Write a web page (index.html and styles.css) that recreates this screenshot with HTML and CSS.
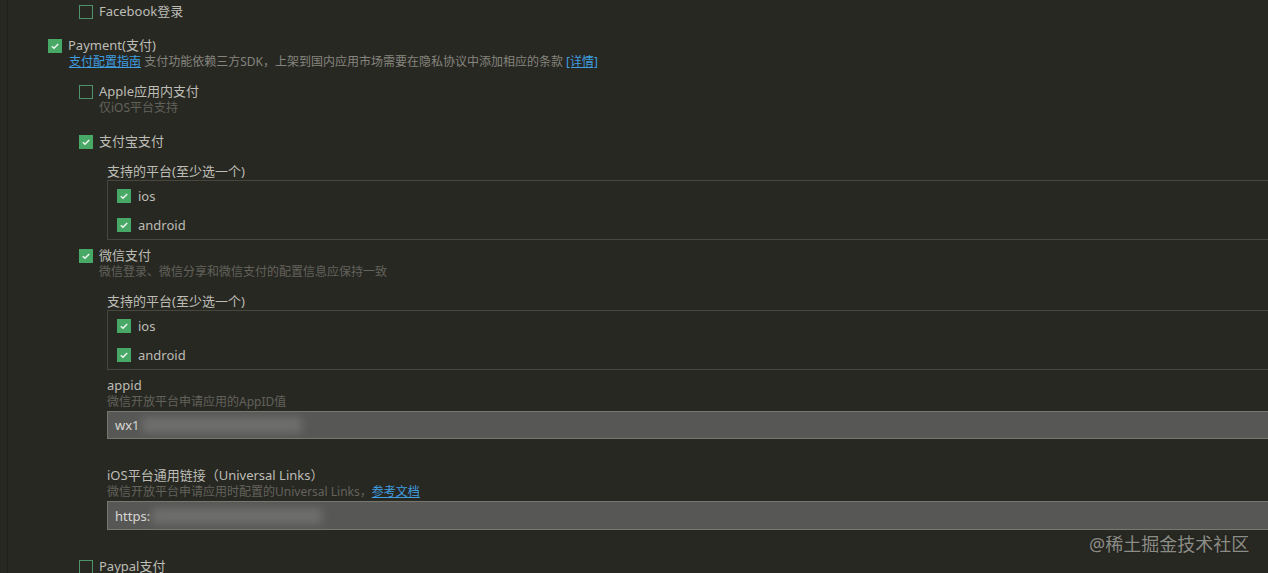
FILE: index.html
```html
<!DOCTYPE html>
<html lang="zh-CN">
<head>
<meta charset="utf-8">
<title>Payment</title>
<link rel="stylesheet" href="styles.css">
</head>
<body>
<div class="page">
  <div class="row lvl2 fb"><span class="cb"></span><span class="label">Facebook登录</span></div>

  <div class="row lvl1 pay"><span class="cb on"><svg viewBox="0 0 14 14"><polyline points="3.8,7.2 6,9.3 10.2,4.9"/></svg></span><span class="label">Payment(支付)</span></div>
  <div class="desc lvl1txt"><a class="link">支付配置指南</a> <span class="grey">支付功能依赖三方SDK，上架到国内应用市场需要在隐私协议中添加相应的条款</span> <a class="link">[详情]</a></div>

  <div class="row lvl2 apple"><span class="cb"></span><span class="label">Apple应用内支付</span></div>
  <div class="sub lvl2txt">仅iOS平台支持</div>

  <div class="row lvl2 ali"><span class="cb on"><svg viewBox="0 0 14 14"><polyline points="3.8,7.2 6,9.3 10.2,4.9"/></svg></span><span class="label">支付宝支付</span></div>
  <div class="group">
    <div class="glabel plat1">支持的平台(至少选一个)</div>
    <div class="box">
      <div class="brow"><span class="cb on"><svg viewBox="0 0 14 14"><polyline points="3.8,7.2 6,9.3 10.2,4.9"/></svg></span><span class="label">ios</span></div>
      <div class="brow"><span class="cb on"><svg viewBox="0 0 14 14"><polyline points="3.8,7.2 6,9.3 10.2,4.9"/></svg></span><span class="label">android</span></div>
    </div>
  </div>

  <div class="row lvl2 wx"><span class="cb on"><svg viewBox="0 0 14 14"><polyline points="3.8,7.2 6,9.3 10.2,4.9"/></svg></span><span class="label">微信支付</span></div>
  <div class="sub lvl2txt">微信登录、微信分享和微信支付的配置信息应保持一致</div>
  <div class="group">
    <div class="glabel plat1">支持的平台(至少选一个)</div>
    <div class="box">
      <div class="brow"><span class="cb on"><svg viewBox="0 0 14 14"><polyline points="3.8,7.2 6,9.3 10.2,4.9"/></svg></span><span class="label">ios</span></div>
      <div class="brow"><span class="cb on"><svg viewBox="0 0 14 14"><polyline points="3.8,7.2 6,9.3 10.2,4.9"/></svg></span><span class="label">android</span></div>
    </div>

    <div class="glabel appid">appid</div>
    <div class="sub">微信开放平台申请应用的AppID值</div>
    <div class="input in1"><span class="val">wx1</span><span class="blur b1"></span></div>

    <div class="glabel ul">iOS平台通用链接（Universal Links）</div>
    <div class="sub">微信开放平台申请应用时配置的Universal Links，<a class="link">参考文档</a></div>
    <div class="input in2"><span class="val">https:</span><span class="blur b2"></span></div>
  </div>

  <div class="row lvl2 paypal"><span class="cb"></span><span class="label">Paypal支付</span></div>
</div>
<div class="watermark">@稀土掘金技术社区</div>
</body>
</html>
```
FILE: styles.css
```css
html, body {
  margin: 0;
  padding: 0;
  background: #282823;
  height: 100%;
  overflow: hidden;
}
body {
  font-family: "Noto Sans", "Noto Sans CJK SC", sans-serif;
  color: #bdbdb5;
  font-size: 13px;
  position: relative;
}
.page {
  margin-left: 7px;
  border-left: 1px solid #1f1f1b;
  min-height: 573px;
  padding-top: 3px;
  box-sizing: border-box;
}
.row {
  display: flex;
  align-items: center;
  height: 17px;
  line-height: 17px;
}
.lvl1 { padding-left: 40px; }
.lvl2 { padding-left: 71px; }
.lvl1txt { padding-left: 61px; }
.lvl2txt { padding-left: 91px; }
.cb {
  width: 14px;
  height: 14px;
  box-sizing: border-box;
  border: 1px solid #4f9468;
  margin-right: 6px;
  flex: none;
  display: inline-flex;
}
.cb.on {
  background: #48a866;
  border-color: #48a866;
}
.cb svg {
  width: 14px;
  height: 14px;
  margin: -1px;
}
.cb polyline {
  fill: none;
  stroke: #eef5ef;
  stroke-width: 1.5;
}
.label { white-space: nowrap; }
.pay { margin-top: 17px; }
.desc {
  font-size: 12px;
  height: 16px;
  line-height: 16px;
  white-space: nowrap;
}
.grey { color: #85857e; }
.link {
  color: #3f9ee0;
  text-decoration: underline;
  cursor: pointer;
}
.apple { margin-top: 13px; }
.sub {
  font-size: 12px;
  height: 16px;
  line-height: 16px;
  color: #62625b;
  white-space: nowrap;
}
.ali { margin-top: 17px; }
.group { padding-left: 99px; }
.glabel {
  height: 17px;
  line-height: 17px;
  color: #bdbdb5;
}
.plat1 { margin-top: 13px; }
.box {
  border: 1px solid #47473f;
  border-right: none;
}
.brow {
  display: flex;
  align-items: center;
  height: 29px;
  padding-left: 9px;
}
.brow .cb { margin-right: 7px; }
.wx { margin-top: 7px; }
.appid { margin-top: 7px; }
.input {
  margin-top: 1px;
  height: 28px;
  box-sizing: border-box;
  background: #575756;
  border: 1px solid #77776f;
  border-right: none;
  display: flex;
  align-items: center;
  padding-left: 7px;
  position: relative;
  overflow: hidden;
}
.in2 { height: 29px; }
.val {
  color: #d8d8d2;
  font-size: 13px;
}
.blur {
  display: block;
  height: 16px;
  background: #727270;
  filter: blur(4px);
  margin-left: 2px;
  opacity: 0.85;
}
.b1 { width: 160px; }
.b2 { width: 170px; }
.ul { margin-top: 28px; }
.paypal { margin-top: 28px; }
.watermark {
  position: absolute;
  left: 1089px;
  top: 532px;
  font-size: 18px;
  line-height: 24px;
  color: #8c8c86;
  text-shadow: 0 0 2px #1f1f1b;
  white-space: nowrap;
}
```
